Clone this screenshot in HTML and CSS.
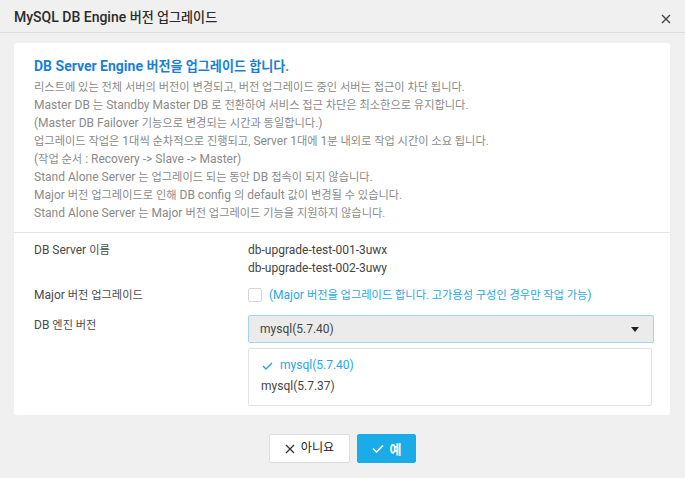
FILE: index.html
```html
<!DOCTYPE html>
<html lang="ko">
<head>
<meta charset="utf-8">
<link rel="stylesheet" href="styles.css">
</head>
<body>
<div class="dialog">
  <div class="header">
    <span class="title">MySQL DB Engine <span class="k">버전 업그레이드</span></span>
    <svg class="close" width="10" height="10" viewBox="0 0 10 10"><path d="M1 1L9 9M9 1L1 9" stroke="#444" stroke-width="1.4"/></svg>
  </div>
  <div class="body">
    <div class="card">
      <div class="info">
        <div class="info-title">DB Server Engine <span class="k">버전을 업그레이드 합니다.</span></div>
        <div class="info-line"><span class="k">리스트에 있는 전체 서버의 버전이 변경되고, 버전 업그레이드 중인 서버는 접근이 차단 됩니다.</span></div>
        <div class="info-line">Master DB <span class="k">는</span> Standby Master DB <span class="k">로 전환하여 서비스 접근 차단은 최소한으로 유지합니다.</span></div>
        <div class="info-line">(Master DB Failover <span class="k">기능으로 변경되는 시간과 동일합니다.</span>)</div>
        <div class="info-line"><span class="k">업그레이드 작업은</span> 1<span class="k">대씩 순차적으로 진행되고,</span> Server 1<span class="k">대에</span> 1<span class="k">분 내외로 작업 시간이 소요 됩니다.</span></div>
        <div class="info-line">(<span class="k">작업 순서</span> : Recovery -&gt; Slave -&gt; Master)</div>
        <div class="info-line">Stand Alone Server <span class="k">는 업그레이드 되는 동안</span> DB <span class="k">접속이 되지 않습니다.</span></div>
        <div class="info-line">Major <span class="k">버전 업그레이드로 인해</span> DB config <span class="k">의</span> default <span class="k">값이 변경될 수 있습니다.</span></div>
        <div class="info-line">Stand Alone Server <span class="k">는</span> Major <span class="k">버전 업그레이드 기능을 지원하지 않습니다.</span></div>
      </div>
      <div class="form">
        <div class="row row-server">
          <div class="label">DB Server <span class="k">이름</span></div>
          <div class="value">
            <div>db-upgrade-test-001-3uwx</div>
            <div>db-upgrade-test-002-3uwy</div>
          </div>
        </div>
        <div class="row row-major">
          <div class="label">Major <span class="k">버전 업그레이드</span></div>
          <div class="value check-row">
            <span class="checkbox"></span>
            <span class="hint">(Major <span class="k">버전을 업그레이드 합니다. 고가용성 구성인 경우만 작업 가능</span>)</span>
          </div>
        </div>
        <div class="row row-engine">
          <div class="label">DB <span class="k">엔진 버전</span></div>
          <div class="value">
            <div class="select">
              <span>mysql(5.7.40)</span>
              <svg class="caret" width="8" height="5" viewBox="0 0 8 5"><path d="M0 0H8L4 5Z" fill="#222"/></svg>
            </div>
            <div class="menu">
              <div class="opt selected">
                <svg class="opt-check" width="11" height="8" viewBox="0 0 11 8"><path d="M1 4L4 7L10 1" fill="none" stroke="#1fa7e4" stroke-width="1.4"/></svg>
                <span>mysql(5.7.40)</span>
              </div>
              <div class="opt">mysql(5.7.37)</div>
            </div>
          </div>
        </div>
      </div>
    </div>
  </div>
  <div class="footer">
    <button class="btn btn-no">
      <svg width="10" height="10" viewBox="0 0 10 10"><path d="M1 1L9 9M9 1L1 9" stroke="#333" stroke-width="1.3"/></svg>
      <span class="k">아니요</span>
    </button>
    <button class="btn btn-yes">
      <svg width="12" height="9" viewBox="0 0 12 9"><path d="M1 4.5L4.5 8L11 1.5" fill="none" stroke="#fff" stroke-width="1.6"/></svg>
      <span>예</span>
    </button>
  </div>
</div>
</body>
</html>
```

FILE: styles.css
```css
* { box-sizing: border-box; }
html, body {
  margin: 0;
  padding: 0;
  background: #f0f0f0;
  font-family: Roboto, "Noto Sans CJK KR", sans-serif;
  color: #444;
}
.k { font-size: 0.935em; line-height: 1; }
.dialog {
  width: 685px;
  height: 478px;
  display: flex;
  flex-direction: column;
}
.header {
  height: 33px;
  border-bottom: 1px solid #dcdcdc;
  display: flex;
  align-items: center;
  justify-content: space-between;
  padding: 2px 14px 0 14px;
}
.title {
  font-size: 14px;
  font-weight: 500;
  color: #2b2b2b;
}
.close { margin-top: 4px; }
.body {
  padding: 10px 15px 0 14px;
}
.card {
  background: #fff;
  border-radius: 3px;
  height: 372px;
}
.info {
  padding: 13px 20px 10px 20px;
  border-bottom: 1px solid #e6e6e6;
}
.info-title {
  font-size: 14px;
  font-weight: 700;
  color: #1b7fd6;
  line-height: 20px;
  margin-bottom: 2px;
}
.info-line {
  font-size: 12px;
  color: #8a8a8a;
  line-height: 18px;
}
.form {
  padding: 8px 18px 0 20px;
}
.row {
  display: grid;
  grid-template-columns: 214px 1fr;
  font-size: 12px;
  line-height: 18px;
}
.label { color: #4a4a4a; }
.value { color: #444; }
.row-major { margin-top: 9px; }
.row-engine { margin-top: 11px; }
.row-engine .label { padding-top: 1px; }
.check-row {
  display: flex;
  align-items: center;
}
.checkbox {
  width: 14px;
  height: 14px;
  border: 1px solid #d6d6d6;
  border-radius: 2px;
  background: #fff;
  margin-right: 7px;
}
.hint { color: #29a8e3; }
.select {
  height: 28px;
  width: 406px;
  background: #ebebeb;
  border: 1px solid #a9d3f2;
  border-radius: 2px;
  display: flex;
  align-items: center;
  justify-content: space-between;
  padding: 0 14px 0 11px;
  color: #444;
}
.menu {
  margin-top: 5px;
  width: 404px;
  border: 1px solid #e2e2e2;
  border-radius: 2px;
  padding: 6px 0 8px 0;
}
.opt {
  line-height: 21px;
  padding-left: 12px;
  display: flex;
  align-items: center;
  color: #444;
}
.opt.selected { color: #1fa7e4; padding-left: 13px; }
.opt-check { margin-right: 7px; }
.footer {
  flex: 1;
  display: flex;
  justify-content: center;
  align-items: flex-start;
  gap: 7px;
  padding-top: 19px;
}
.btn {
  height: 29px;
  border-radius: 2px;
  font-family: Roboto, "Noto Sans CJK KR", sans-serif;
  font-size: 13px;
  display: flex;
  align-items: center;
  justify-content: center;
  gap: 6px;
  cursor: pointer;
}
.btn-no {
  width: 81px;
  background: #fff;
  border: 1px solid #dedede;
  color: #222;
}
.btn-yes {
  width: 59px;
  background: #19ace8;
  border: 1px solid #19ace8;
  color: #fff;
  font-weight: 700;
}
```
